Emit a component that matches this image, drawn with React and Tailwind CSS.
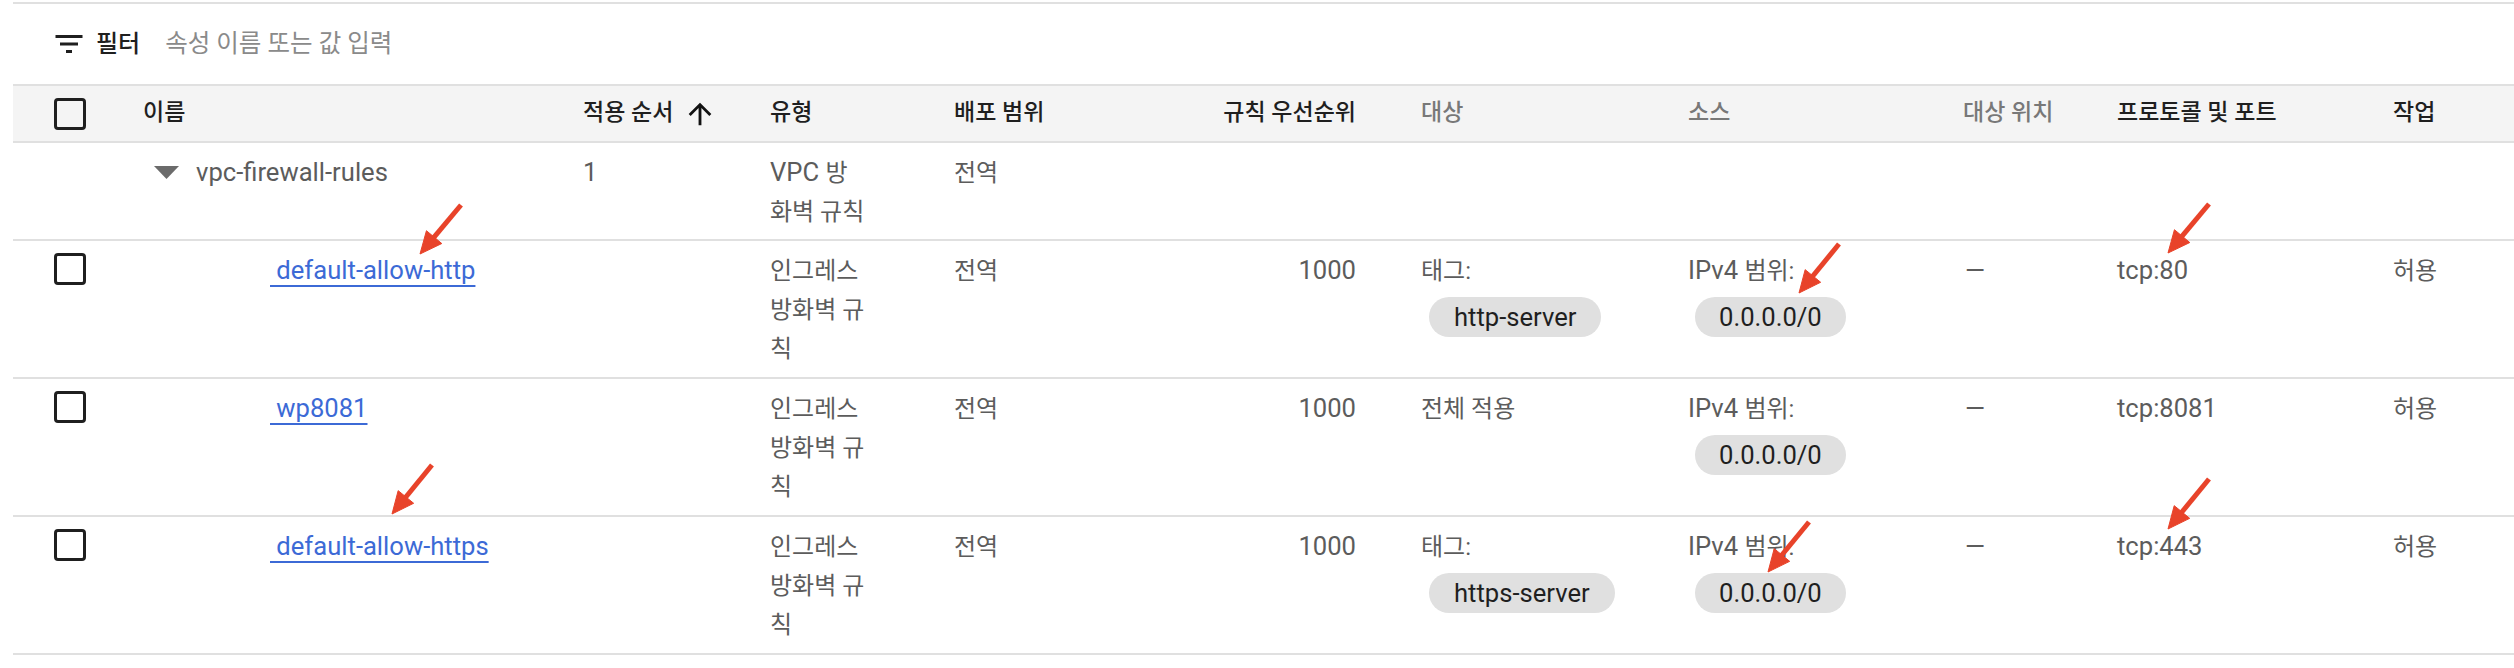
const COLS =
  "grid grid-cols-[130px_440px_187px_184px_246px_221px_267px_275px_154px_276px_1fr]";

const rules = [
  { name: "default-allow-http", tag: "http-server", proto: "tcp:80" },
  { name: "wp8081", tag: null, proto: "tcp:8081" },
  { name: "default-allow-https", tag: "https-server", proto: "tcp:443" },
];

const arrows = [
  [461, 205, 420, 254],
  [1839, 244, 1799, 293],
  [2209, 204, 2168, 253],
  [432, 465, 392, 514],
  [1809, 522, 1768, 572],
  [2209, 479, 2168, 529],
];

function K({ children, className = "" }) {
  return <span className={`text-[24px] leading-none ${className}`}>{children}</span>;
}

function Checkbox() {
  return <div className="h-[32px] w-[32px] rounded-[4px] border-[3.5px] border-[#1f1f1f]" />;
}

function Chip({ children, className = "" }) {
  return (
    <div
      className={`mt-[7px] flex h-[40px] w-fit items-center rounded-full bg-[#e0e0e0] px-[24px] leading-[40px] text-[#1f1f1f] ${className}`}
    >
      {children}
    </div>
  );
}

function Arrow({ x1, y1, x2, y2 }) {
  const len = Math.hypot(x2 - x1, y2 - y1);
  const dx = (x2 - x1) / len;
  const dy = (y2 - y1) / len;
  const bx = x2 - dx * 22;
  const by = y2 - dy * 22;
  const nx = -dy * 10;
  const ny = dx * 10;
  return (
    <g fill="#e8432a" stroke="#e8432a">
      <line x1={x1} y1={y1} x2={bx + dx * 2} y2={by + dy * 2} strokeWidth="5" />
      <polygon points={`${x2},${y2} ${bx + nx},${by + ny} ${bx - nx},${by - ny}`} strokeWidth="1" />
    </g>
  );
}

function HeaderCell({ children, muted, className = "" }) {
  return (
    <div
      className={`text-[23px] font-medium ${muted ? "text-[#787878]" : "text-[#1f1f1f]"} ${className}`}
    >
      {children}
    </div>
  );
}

function RuleRow({ rule }) {
  return (
    <div
      className={`${COLS} border-b-2 border-[#e0e0e0] pt-[10px] pb-[9px] leading-[39px] text-[#5c5c5c]`}
    >
      <div className="mt-[2px] pl-[41px]">
        <Checkbox />
      </div>
      <div className="pl-[127px]">
        <a className="text-[#3c6ad6] underline decoration-2 underline-offset-[6px]">
          {"\u00a0" + rule.name}
        </a>
      </div>
      <div />
      <div>
        <K>인그레스</K>
        <br />
        <K>방화벽 규</K>
        <br />
        <K>칙</K>
      </div>
      <div>
        <K>전역</K>
      </div>
      <div className="pr-[65px] text-right">1000</div>
      <div>
        {rule.tag ? (
          <>
            <K>태그:</K>
            <Chip className="ml-[8px] px-[25px]">{rule.tag}</Chip>
          </>
        ) : (
          <K>전체 적용</K>
        )}
      </div>
      <div>
        IPv4 <K>범위:</K>
        <Chip className="ml-[7px]">0.0.0.0/0</Chip>
      </div>
      <div className="pl-[2px]">—</div>
      <div>{rule.proto}</div>
      <div>
        <K>허용</K>
      </div>
    </div>
  );
}

export default function App() {
  return (
    <div className="relative h-[668px] w-[2514px] overflow-hidden bg-white font-[Roboto,'Noto_Sans_CJK_KR',sans-serif] text-[25.6px]">
      <div className="pl-[13px]">
        <div className="mt-[2px] flex h-[82px] items-center border-t-2 border-[#e0e0e0] pl-[38px]">
          <svg width="36" height="36" viewBox="0 0 24 24" fill="#1f1f1f">
            <path d="M10 18h4v-2h-4v2zM3 6v2h18V6H3zm3 7h12v-2H6v2z" />
          </svg>
          <span className="ml-[9px] text-[24px] font-medium text-[#1f1f1f]">필터</span>
          <span className="ml-[25px] text-[24.5px] text-[#8a8a8a]">속성 이름 또는 값 입력</span>
        </div>

        <div className={`${COLS} h-[59px] items-center border-y-2 border-[#e0e0e0] bg-[#f4f4f4]`}>
          <div className="pl-[41px]">
            <Checkbox />
          </div>
          <HeaderCell>이름</HeaderCell>
          <HeaderCell className="flex items-center">
            적용 순서
            <svg className="ml-[10px]" width="34" height="34" viewBox="0 0 24 24" fill="#111">
              <path d="M4 12l1.41 1.41L11 7.83V20h2V7.83l5.58 5.59L20 12l-8-8-8 8z" />
            </svg>
          </HeaderCell>
          <HeaderCell>유형</HeaderCell>
          <HeaderCell>배포 범위</HeaderCell>
          <HeaderCell className="pr-[65px] text-right">규칙 우선순위</HeaderCell>
          <HeaderCell muted>대상</HeaderCell>
          <HeaderCell muted>소스</HeaderCell>
          <HeaderCell muted>대상 위치</HeaderCell>
          <HeaderCell>프로토콜 및 포트</HeaderCell>
          <HeaderCell>작업</HeaderCell>
        </div>

        <div
          className={`${COLS} border-b-2 border-[#e0e0e0] pt-[10px] pb-[8px] leading-[39px] text-[#5c5c5c]`}
        >
          <div />
          <div className="flex h-[39px] items-center pl-[11px]">
            <svg width="25" height="13" viewBox="0 0 25 13" fill="#6b6b6b">
              <polygon points="0,0 25,0 12.5,13" />
            </svg>
            <span className="ml-[17px]">vpc-firewall-rules</span>
          </div>
          <div>1</div>
          <div>
            VPC <K>방</K>
            <br />
            <K>화벽 규칙</K>
          </div>
          <div>
            <K>전역</K>
          </div>
        </div>

        {rules.map((r) => (
          <RuleRow key={r.name} rule={r} />
        ))}
      </div>

      <svg
        className="pointer-events-none absolute inset-0"
        width="2514"
        height="668"
        viewBox="0 0 2514 668"
      >
        {arrows.map(([x1, y1, x2, y2], i) => (
          <Arrow key={i} x1={x1} y1={y1} x2={x2} y2={y2} />
        ))}
      </svg>
    </div>
  );
}
